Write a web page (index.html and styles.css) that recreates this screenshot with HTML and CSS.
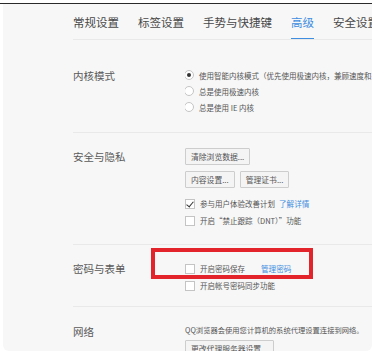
FILE: index.html
```html
<!DOCTYPE html>
<html lang="zh-CN">
<head>
    <meta charset="UTF-8">
    <meta name="viewport" content="width=device-width, initial-scale=1.0">
    <title>高级设置</title>
    <link rel="stylesheet" href="styles.css">
</head>
<body>
    <div class="frame">
        <div class="panel">
            <nav class="tabs">
                <span class="tab">常规设置</span>
                <span class="tab">标签设置</span>
                <span class="tab">手势与快捷键</span>
                <span class="tab tab--active">高级</span>
                <span class="tab">安全设置</span>
            </nav>

            <section class="section section--kernel">
                <div class="section__label">内核模式</div>
                <div class="section__body">
                    <label class="option"><span class="radio radio--on"></span>使用智能内核模式（优先使用极速内核，兼顾速度和兼容性）</label>
                    <label class="option"><span class="radio"></span>总是使用极速内核</label>
                    <label class="option"><span class="radio"></span>总是使用 IE 内核</label>
                </div>
            </section>

            <section class="section section--privacy">
                <div class="section__label section__label--btn">安全与隐私</div>
                <div class="section__body">
                    <div class="btn-row"><button class="btn">清除浏览数据...</button></div>
                    <div class="btn-row">
                        <button class="btn">内容设置...</button>
                        <button class="btn">管理证书...</button>
                    </div>
                    <label class="option option--check"><span class="check check--on"></span>参与用户体验改善计划<a class="link">了解详情</a></label>
                    <label class="option option--check"><span class="check"></span>开启“禁止跟踪（DNT）”功能</label>
                </div>
            </section>

            <section class="section section--password">
                <div class="section__label">密码与表单</div>
                <div class="section__body">
                    <label class="option option--check"><span class="check"></span>开启密码保存<a class="link link--wide">管理密码</a></label>
                    <label class="option option--check"><span class="check"></span>开启帐号密码同步功能</label>
                </div>
            </section>

            <section class="section section--network">
                <div class="section__label">网络</div>
                <div class="section__body">
                    <p class="note">QQ浏览器会使用您计算机的系统代理设置连接到网络。</p>
                    <button class="btn">更改代理服务器设置...</button>
                </div>
            </section>
        </div>
    </div>

    <div class="highlight" aria-hidden="true"></div>
</body>
</html>
```

FILE: styles.css
```css
:root {
    --panel: #f7f7f7;
    --line: #e9e9e9;
    --text: #555555;
    --label: #5a5a5a;
    --blue: #3f8de0;
    --red: #e3242b;
    --font-cjk: "Noto Sans CJK SC", "Noto Sans", sans-serif;
}

* {
    box-sizing: border-box;
}

body {
    margin: 0;
    background: #ffffff;
    font-family: var(--font-cjk);
    color: var(--text);
}

.frame {
    width: 372px;
    margin-top: 3px;
    border-top: 1px solid #2a2a2a;
}

.panel {
    margin-left: 3px;
    height: 347px;
    background: var(--panel);
    border-radius: 0 0 6px 6px;
    overflow: hidden;
}

/* Tabs */
.tabs {
    display: flex;
    gap: 19px;
    margin-left: 70px;
    height: 36px;
    align-items: center;
    border-bottom: 1px solid var(--line);
    white-space: nowrap;
    overflow: hidden;
}

.tab {
    position: relative;
    font-size: 11.5px;
    line-height: 36px;
    color: #474747;
}

.tab--active {
    color: var(--blue);
}

.tab--active::after {
    content: "";
    position: absolute;
    left: 0;
    right: 0;
    bottom: 0;
    height: 2px;
    background: var(--blue);
}

/* Sections */
.section {
    display: grid;
    grid-template-columns: 112px 1fr;
    margin-left: 70px;
    border-bottom: 1px solid var(--line);
    white-space: nowrap;
}

.section--kernel {
    padding: 27px 0 17px;
}

.section--privacy {
    padding: 15px 0 15px;
}

.section--password {
    padding: 15px 0 12px;
}

.section--network {
    padding: 16px 0 0;
    border-bottom: none;
}

.section__label {
    font-size: 10.5px;
    line-height: 17px;
    color: var(--label);
}

.section__label--btn {
    line-height: 18px;
}

.section__body {
    display: flex;
    flex-direction: column;
    align-items: flex-start;
    overflow: hidden;
}

.option {
    display: flex;
    align-items: center;
    height: 16px;
    font-size: 7.5px;
    color: var(--text);
}

.option--check {
    height: 17px;
}

.radio,
.check {
    flex: none;
    width: 10px;
    height: 10px;
    margin: 0 5px 0 0;
    border: 1px solid #c4c4c4;
    background: #ffffff;
}

.radio {
    margin-left: -1px;
    border-radius: 50%;
    display: flex;
    align-items: center;
    justify-content: center;
}

.radio--on::after {
    content: "";
    width: 4px;
    height: 4px;
    border-radius: 50%;
    background: #333333;
}

.check--on {
    position: relative;
}

.check--on::after {
    content: "";
    position: absolute;
    left: 2px;
    top: 0;
    width: 3px;
    height: 6px;
    border: solid #333333;
    border-width: 0 1.2px 1.2px 0;
    transform: rotate(40deg);
}

.link {
    margin-left: 4px;
    color: var(--blue);
    font-size: 7.6px;
}

.link--wide {
    margin-left: 16px;
}

/* Buttons */
.btn-row {
    display: flex;
    gap: 5px;
    margin-bottom: 6px;
}

.btn {
    height: 17px;
    padding: 0 5px;
    border: 1px solid #cdcdcd;
    border-radius: 1px;
    background: #f4f4f4;
    font-family: var(--font-cjk);
    font-size: 7.8px;
    line-height: 15px;
    color: var(--text);
}

.section--privacy .btn-row + .btn-row {
    margin-bottom: 7px;
}

.note {
    margin: 0 0 3px;
    height: 14px;
    font-size: 7.3px;
    line-height: 14px;
    color: var(--text);
}

/* Red mark drawn over the password row */
.highlight {
    position: absolute;
    left: 151px;
    top: 248px;
    width: 162px;
    height: 31px;
    border: 4px solid var(--red);
}
```
